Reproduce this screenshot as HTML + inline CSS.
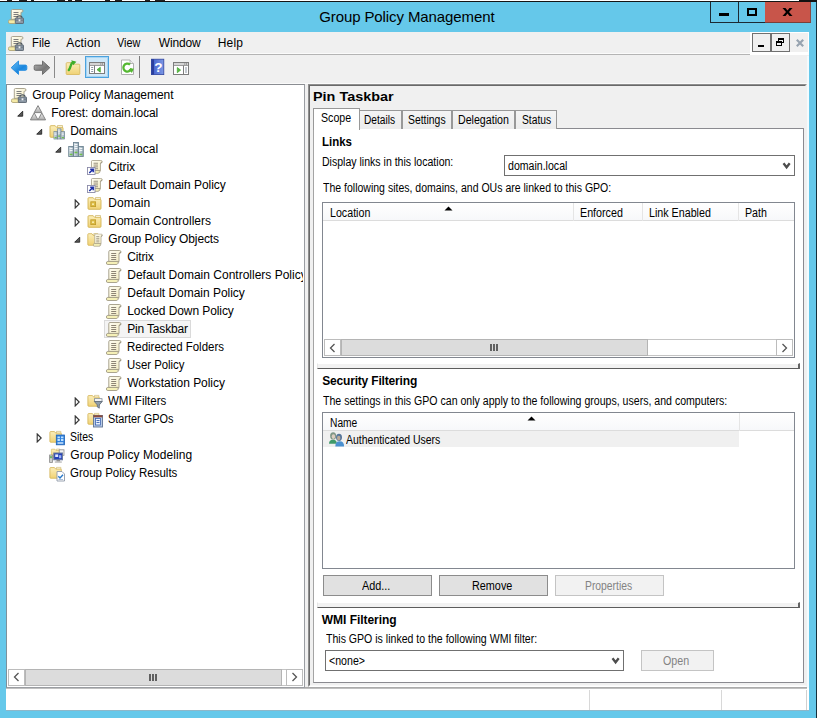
<!DOCTYPE html>
<html><head><meta charset="utf-8"><title>Group Policy Management</title>
<style>
*{box-sizing:border-box;margin:0;padding:0}
html,body{width:817px;height:718px;overflow:hidden}
body{background:#65c8ea;position:relative;font-family:"Liberation Sans",sans-serif;font-size:12px;color:#000}
.a{position:absolute}
.t{position:absolute;white-space:nowrap;line-height:20px;height:20px;transform-origin:0 50%}
.ic{position:absolute;overflow:visible}
.btn{position:absolute;border:1px solid #8c8c8c;background:#e1e1e1}
.btn.dis{background:#f2f2f2;border-color:#c4c4c4}
.lv{position:absolute;background:#fff;border:1px solid #828790}
.sb{position:absolute;background:#fff;border:1px solid #bcbcbc}
.thumb{position:absolute;background:#dcdcdc;border:1px solid #b4b4b4}
.tab{position:absolute;top:110px;height:19px;background:linear-gradient(#f4f4f4,#ececec);border:1px solid #989898;border-bottom:none}
</style></head><body>
<svg width="0" height="0" style="position:absolute">
<defs>
<linearGradient id="gPaper" x1="0" y1="0" x2="1" y2="1"><stop offset="0" stop-color="#fffef4"/><stop offset="1" stop-color="#f4ecc0"/></linearGradient>
<linearGradient id="gFold" x1="0" y1="0" x2="0" y2="1"><stop offset="0" stop-color="#fbeebb"/><stop offset="1" stop-color="#f0d274"/></linearGradient>
<linearGradient id="gGray" x1="0" y1="0" x2="0" y2="1"><stop offset="0" stop-color="#f2f2f2"/><stop offset="1" stop-color="#a9a9a9"/></linearGradient>
<linearGradient id="gSrv" x1="0" y1="0" x2="1" y2="0"><stop offset="0" stop-color="#d9e2e8"/><stop offset="1" stop-color="#8fa3b1"/></linearGradient>
<linearGradient id="gBlueArrow" x1="0" y1="0" x2="1" y2="1"><stop offset="0" stop-color="#6cc4f7"/><stop offset=".6" stop-color="#1a86de"/><stop offset="1" stop-color="#3aa0ea"/></linearGradient>
<linearGradient id="gGrayArrow" x1="0" y1="0" x2="1" y2="1"><stop offset="0" stop-color="#b5b5b5"/><stop offset=".6" stop-color="#777"/><stop offset="1" stop-color="#9a9a9a"/></linearGradient>
<symbol id="e-open" viewBox="0 0 9 10"><path d="M6.700 2.200v5h-5z" fill="#595959" stroke="#262626" stroke-width=".9"/></symbol>
<symbol id="e-closed" viewBox="0 0 9 10"><path d="M2.200 1l4 4-4 4z" fill="#fff" stroke="#333" stroke-width="1.100"/></symbol>
<symbol id="scroll" viewBox="0 0 16 16"><path d="M2.800 11.500V1.700q0-1.200 1.200-1.200h9.300q1.700 0 1.700 1.500 0 1.300-1.600 1.300h-.4v8.200z" fill="url(#gPaper)" stroke="#a29b84" stroke-width=".9"/><path d="M13 3.300q1.600 0 1.600-1.400" fill="none" stroke="#8f8a78" stroke-width=".8"/><path d="M1.800 11.400h10.400q-.2 1.800-1.500 3.100h-8.900q-1.400 0-1.400-1.500t1.400-1.600z" fill="#f5f0b6" stroke="#a29b84" stroke-width=".9"/><path d="M11 11.600q1.200.6 1.900-.1 0 1.700-1.600 2.900" fill="#e1dcbc" stroke="#a29b84" stroke-width=".6"/><path d="M5.200 3.500h5M5.200 5.500h5M5.200 7.500h5M5.200 9.500h5" stroke="#8d8474" stroke-width="1"/></symbol>
<symbol id="i-gpo" viewBox="0 0 16 16"><use href="#scroll"/></symbol>
<symbol id="i-link" viewBox="0 0 16 16"><g transform="translate(2 0) scale(.88 .92)"><use href="#scroll"/></g><rect x=".5" y="7.500" width="7.500" height="7" fill="#fff" stroke="#8a8aa8" stroke-width=".9"/><path d="M2.300 13l3.600-3.600M3.200 9.200h3v3" stroke="#1d2fa8" stroke-width="1.500" fill="none"/></symbol>
<symbol id="i-gpm" viewBox="0 0 16 16"><path d="M3.300 10.500V1.700q0-1.200 1.200-1.200h8.800q1.700 0 1.700 1.500 0 1.300-1.600 1.300h-.4v6z" fill="url(#gPaper)" stroke="#a29b84" stroke-width=".9"/><path d="M5.500 3.500h5M5.500 5.500h5M5.500 7.500h3.500" stroke="#7d7d7d" stroke-width="1"/><path d="M1.800 10.900h6v3.600h-6q-1.400 0-1.400-1.800t1.400-1.800z" fill="#f5eaa6" stroke="#b1a676" stroke-width=".9"/><path d="M9 8.700q0-1.900 2.500-1.900t2.500 1.900" fill="none" stroke="#4d5660" stroke-width="1.300"/><rect x="7.300" y="9" width="8.200" height="5.500" rx=".6" fill="#8c98a5" stroke="#5b6672" stroke-width=".9"/><path d="M7.500 11.200h8" stroke="#6c7682" stroke-width="1"/><rect x="10.600" y="10.300" width="1.800" height="2" fill="#eef0f2"/></symbol>
<symbol id="i-forest" viewBox="0 0 16 16"><path d="M8 .6l3.800 7h-7.600z" fill="url(#gGray)" stroke="#858585" stroke-width="1"/><path d="M4.200 7.900l3.800 7h-7.600z" fill="url(#gGray)" stroke="#858585" stroke-width="1"/><path d="M11.800 7.900l3.800 7h-7.600z" fill="url(#gGray)" stroke="#858585" stroke-width="1"/></symbol>
<symbol id="i-folder" viewBox="0 0 16 16"><path d="M8.500 1.500h5v3h-5z" fill="#fffdf2" stroke="#cdb567" stroke-width=".7"/><path d="M1 2.600q0-.9.9-.9h4.300l1.400 1.600h5.500q.9 0 .9.900v8.200q0 .9-.9.900h-11.200q-.9 0-.9-.9z" fill="url(#gFold)" stroke="#d4b455" stroke-width=".9"/></symbol>
<symbol id="i-domains" viewBox="0 0 16 16"><use href="#i-folder"/><g transform="translate(4.300 4.300) scale(.74)"><use href="#srv3"/></g></symbol>
<symbol id="srv3" viewBox="0 0 16 16"><rect x="5.500" y=".5" width="5" height="14" fill="url(#gSrv)" stroke="#6f8593" stroke-width=".9"/><rect x=".7" y="4.500" width="4.800" height="10" fill="url(#gSrv)" stroke="#6f8593" stroke-width=".9"/><rect x="10.500" y="4.500" width="4.800" height="10" fill="url(#gSrv)" stroke="#6f8593" stroke-width=".9"/><path d="M6.500 2.500h3M6.500 4.500h3M6.500 6.500h3M1.700 6.500h2.800M11.500 6.500h2.800M1.700 8.500h2.800M11.500 8.500h2.800" stroke="#f3f6f8" stroke-width="1"/><path d="M1.700 12.500h2.800M11.500 12.500h2.800M6.500 10.500h3" stroke="#6fc04a" stroke-width="1.600"/></symbol>
<symbol id="i-domain" viewBox="0 0 16 16"><use href="#srv3"/></symbol>
<symbol id="i-ou" viewBox="0 0 16 16"><use href="#i-folder"/><rect x="3.800" y="5.800" width="4.800" height="4.800" fill="#dcbc45" stroke="#c09b2a" stroke-width=".8"/><rect x="5" y="7.400" width="2" height="1.600" fill="#f7e9a8"/></symbol>
<symbol id="i-gpofolder" viewBox="0 0 16 16"><g transform="scale(.8 1)"><use href="#i-folder"/></g><g transform="translate(6 1.500) scale(.62 .88)"><use href="#scroll"/></g></symbol>
<symbol id="i-wmi" viewBox="0 0 16 16"><g transform="scale(.88 .92)"><use href="#i-folder"/></g><rect x="7.500" y="4.700" width="7.500" height="2.600" fill="#fff" stroke="#7c8894" stroke-width=".8"/><path d="M7.300 7.500h8l-3 3.400v3.300l-2-1.300v-2z" fill="#8e9dab" stroke="#5e6a76" stroke-width=".8"/></symbol>
<symbol id="i-starter" viewBox="0 0 16 16"><g transform="scale(.88 .92)"><use href="#i-folder"/></g><rect x="6.500" y="3.500" width="9" height="11.500" fill="#b9cbe6" stroke="#5f7392" stroke-width=".9"/><rect x="6.500" y="3.300" width="9" height="2" fill="#8c4b3b"/><rect x="8.500" y="6.500" width="5" height="6.500" fill="#eaf1fb" stroke="#3d64b0" stroke-width=".8"/><path d="M9.500 8.500h3M9.500 10.500h3" stroke="#3d64b0" stroke-width=".9"/></symbol>
<symbol id="i-sites" viewBox="0 0 16 16"><g transform="scale(.88 .92)"><use href="#i-folder"/></g><rect x="7.300" y="5" width="8.200" height="9.800" fill="#2f80dc" stroke="#1e62b4" stroke-width=".8"/><path d="M8.500 7.300h2.400M12 7.300h2.400M8.500 10h2.400M12 10h2.400" stroke="#bfe2ff" stroke-width="1.800"/><path d="M8.500 13h5.800" stroke="#e8f4ff" stroke-width="1.300"/></symbol>
<symbol id="i-modeling" viewBox="0 0 16 16"><g transform="translate(1.500 0) scale(.7 .7)"><use href="#i-folder"/></g><rect x="10.200" y="1.800" width="4.800" height="5.500" fill="#f2f2f2" stroke="#8f8f8f" stroke-width=".8"/><rect x="4.800" y="5" width="8.700" height="6.800" fill="#2340b8" stroke="#6b7a9a" stroke-width="1"/><rect x="6.200" y="6.400" width="3" height="2.600" fill="#dfe8ff"/><rect x="10" y="7.200" width="2.300" height="3" fill="#9fb4f0"/><rect x="7.500" y="12" width="3.500" height="1.500" fill="#8e8e8e"/><rect x="5.800" y="13.400" width="7" height="1.300" fill="#b5b5b5"/><rect x=".6" y="7" width="2.800" height="7.500" fill="#cfcfcf" stroke="#8a8a8a" stroke-width=".8"/><rect x="1.300" y="8.200" width="1.400" height="2" fill="#3aa83a"/></symbol>
<symbol id="i-results" viewBox="0 0 16 16"><g transform="scale(.88 .92)"><use href="#i-folder"/></g><path d="M8 5.500h5l2.500 2.500v7h-7.500z" fill="#fff" stroke="#8e98a8" stroke-width=".9"/><path d="M9.300 10.300l1.700 1.700 3-3.200" stroke="#2a78c8" fill="none" stroke-width="1.400"/><path d="M9.500 13.500h4.500" stroke="#9db7d8" stroke-width=".9"/></symbol>
</defs></svg>

<!-- top remnants -->
<div class="a" style="left:0;top:0;width:817px;height:1px;background:#fff"></div>
<div class="a" style="left:0;top:1px;width:817px;height:1px;background:#151515"></div>
<div class="a" style="left:7px;top:0;width:5px;height:1px;background:#222"></div>
<div class="a" style="left:19px;top:0;width:8px;height:1px;background:#222"></div>
<div class="a" style="left:31px;top:0;width:3px;height:1px;background:#222"></div>
<div class="a" style="left:57px;top:0;width:8px;height:1px;background:#222"></div>
<div class="a" style="left:68px;top:0;width:4px;height:1px;background:#222"></div>
<div class="a" style="left:75px;top:0;width:7px;height:1px;background:#222"></div>
<div class="a" style="left:105px;top:0;width:5px;height:1px;background:#222"></div>
<div class="a" style="left:115px;top:0;width:7px;height:1px;background:#222"></div>
<div class="a" style="left:145px;top:0;width:5px;height:1px;background:#222"></div>
<div class="a" style="left:155px;top:0;width:10px;height:1px;background:#222"></div>
<div class="a" style="left:799px;top:0;width:18px;height:2px;background:#111"></div>

<!-- title icon -->
<svg class="ic" style="left:8.400px;top:9px" width="16" height="16"><use href="#i-gpm"/></svg>

<!-- caption buttons -->
<div class="a" style="left:710px;top:2px;width:55px;height:21px;border:1px solid #1c2a33;border-top:none;border-right:none"></div>
<div class="a" style="left:738px;top:2px;width:1px;height:20px;background:#1c2a33"></div>
<div class="a" style="left:719px;top:13px;width:10px;height:3px;background:#000"></div>
<div class="a" style="left:747px;top:8px;width:10px;height:8px;border:2px solid #000"></div>
<div class="a" style="left:765px;top:2px;width:46px;height:21px;background:#c8554a;border-bottom:1px solid #7a3f3a;border-right:1px solid #8a4a44"></div>
<svg class="ic" style="left:782px;top:8px" width="11" height="8"><path d="M0.500 0h3l2 2.600 2-2.600h3l-3.500 4 3.500 4h-3l-2-2.600-2 2.600h-3l3.500-4z" fill="#000"/></svg>

<!-- client -->
<div class="a" style="left:6px;top:32px;width:803px;height:678px;background:#f0f0f0"></div>
<div class="a" style="left:807px;top:56px;width:2px;height:654px;background:#f3fbfe"></div>
<div class="a" style="left:816px;top:2px;width:1px;height:716px;background:#14303c"></div>
<div class="a" style="left:750px;top:32px;width:59px;height:23px;background:#fff"></div>
<!-- menu icon -->
<svg class="ic" style="left:8.400px;top:36px" width="16" height="16"><use href="#i-gpm"/></svg>
<!-- MDI child buttons -->
<div class="a" style="left:752px;top:33px;width:19px;height:19px;border:1px solid #707070;background:#f0f0f0"></div>
<div class="a" style="left:771px;top:33px;width:19px;height:19px;border:1px solid #707070;background:#f0f0f0"></div>
<div class="a" style="left:790px;top:33px;width:18px;height:19px;background:#f0f0f0"></div>
<div class="a" style="left:758px;top:45px;width:6px;height:2px;background:#000"></div>
<div class="a" style="left:778px;top:38px;width:6px;height:5px;border:1px solid #000;border-top-width:2px"></div>
<div class="a" style="left:776px;top:41px;width:6px;height:5px;border:1px solid #000;border-top-width:2px;background:#f0f0f0"></div>
<svg class="ic" style="left:795.500px;top:38.500px" width="8" height="8"><path d="M.8.800l6.400 6.400M7.200.800l-6.400 6.400" stroke="#97a3b0" stroke-width="2.200"/></svg>
<!-- menu/toolbar separator -->
<div class="a" style="left:6px;top:53px;width:744px;height:1px;background:#fbfbfb"></div>
<div class="a" style="left:6px;top:54px;width:744px;height:1px;background:#b4b4b4"></div>
<div class="a" style="left:6px;top:83px;width:802px;height:1px;background:#fafafa"></div>

<!-- toolbar -->
<svg class="ic" style="left:10px;top:60px" width="18" height="16"><path d="M1.200 7.700l7.300-6.700v4.100h7q1.300 0 1.300 1.300v2.600q0 1.300-1.300 1.300h-7v4.100z" fill="url(#gBlueArrow)" stroke="#2a8fe0" stroke-width="1"/></svg>
<svg class="ic" style="left:33px;top:60px" width="18" height="16"><path d="M16.800 7.700l-7.300-6.700v4.100h-7q-1.300 0-1.300 1.300v2.600q0 1.300 1.300 1.300h7v4.100z" fill="url(#gGrayArrow)" stroke="#6e6e6e" stroke-width="1"/></svg>
<div class="a" style="left:54px;top:56px;width:1px;height:22px;background:#8a8a8a"></div>
<svg class="ic" style="left:65px;top:59px" width="16" height="16"><path d="M1.200 4.500q0-.8.800-.8h4.200l1.300 1.500h6.500q.8 0 .8.800v8.700q0 .8-.8.800h-12q-.8 0-.8-.8z" fill="url(#gFold)" stroke="#d9bb62" stroke-width=".9"/><path d="M3.800 11q1.200-1.500 2-4.500.6-2.600 2.700-3.300" stroke="#3fae2a" stroke-width="2.400" fill="none" stroke-linecap="round"/><path d="M6.200 1.300l5.200 1.400-3.200 3.600z" fill="#3fae2a"/></svg>
<div class="a" style="left:85px;top:56px;width:24px;height:22px;background:#cfe8f8;border:1px solid #4ba3df;box-shadow:inset 0 0 0 1px #a8d4f2"></div>
<svg class="ic" style="left:89px;top:62px" width="16" height="12"><rect x=".5" y=".5" width="15" height="11" fill="#fff" stroke="#7d7d7d"/><rect x="1" y="1" width="14" height="2.600" fill="#d4d4d4"/><path d="M1 3.500h14" stroke="#8a8a8a" stroke-width=".8"/><rect x="11.300" y="1.500" width="1" height="1" fill="#666"/><rect x="13" y="1.500" width="1" height="1" fill="#666"/><path d="M5.500 3.500v8" stroke="#7d7d7d"/><path d="M2.200 5.500h2M2.200 7.500h2M2.200 9.500h2" stroke="#7d8a9a" stroke-width=".9"/><path d="M11.300 5.200l-3.300 2.500 3.300 2.500z" fill="#56b83f" stroke="#3fa62c" stroke-width=".7"/></svg>
<svg class="ic" style="left:120px;top:59px" width="15" height="17"><path d="M1.500 1h8.500l3.500 3.500v11h-12z" fill="#fff" stroke="#a6a6a6" stroke-width=".9"/><path d="M10 1v3.500h3.500" fill="#eee" stroke="#a6a6a6" stroke-width=".8"/><path d="M11.300 9.300a4 4 0 1 1-1.300-3.700" fill="none" stroke="#55b832" stroke-width="2.300"/><path d="M8.600 10.200l5.300-.6-2 4.400z" fill="#55b832"/></svg>
<div class="a" style="left:139px;top:56px;width:1px;height:22px;background:#7d7d7d"></div>
<svg class="ic" style="left:151px;top:59px" width="13" height="16"><defs><linearGradient id="gHelp" x1="0" y1="0" x2="1" y2="0"><stop offset="0" stop-color="#3d5ccc"/><stop offset="1" stop-color="#7c98e4"/></linearGradient></defs><rect x=".4" y=".2" width="12.400" height="15.400" fill="url(#gHelp)" stroke="#2f449e" stroke-width=".8"/><rect x=".4" y=".2" width="2.600" height="15.400" fill="#2a3f9e"/><text x="7.400" y="13" font-family="Liberation Sans, sans-serif" font-size="13.500" font-weight="700" fill="#fff" text-anchor="middle">?</text></svg>
<svg class="ic" style="left:173px;top:62px" width="16" height="13"><rect x=".5" y=".5" width="15" height="12" fill="#fff" stroke="#7d7d7d"/><rect x="1" y="1" width="14" height="2.600" fill="#d4d4d4"/><path d="M1 3.500h14" stroke="#8a8a8a" stroke-width=".8"/><rect x="11.300" y="1.500" width="1" height="1" fill="#666"/><rect x="13" y="1.500" width="1" height="1" fill="#666"/><path d="M10.500 3.500v9" stroke="#7d7d7d"/><path d="M12 6h2M12 8h2M12 10h2" stroke="#7d8a9a" stroke-width=".9"/><path d="M4.300 5.500l3.300 2.600-3.300 2.600z" fill="#56b83f" stroke="#3fa62c" stroke-width=".7"/></svg>

<!-- left pane -->
<div class="a" style="left:6px;top:84px;width:299px;height:604px;background:#fff;border:1px solid #9a9da2;border-left-color:#7d919c;border-top-color:#8a8d92"></div>
<div class="a" style="left:104px;top:320px;width:87px;height:18px;background:#f4f4f4;border:1px solid #dadada"></div>
<svg class="ic" style="left:11px;top:88px" width="16" height="16"><use href="#i-gpm"/></svg>
<svg class="ic" style="left:30px;top:105px" width="16" height="16"><use href="#i-forest"/></svg>
<svg class="ic" style="left:16px;top:109px" width="9" height="10"><use href="#e-open"/></svg>
<svg class="ic" style="left:49px;top:124px" width="16" height="16"><use href="#i-domains"/></svg>
<svg class="ic" style="left:35px;top:127px" width="9" height="10"><use href="#e-open"/></svg>
<svg class="ic" style="left:68px;top:142px" width="16" height="16"><use href="#i-domain"/></svg>
<svg class="ic" style="left:54px;top:145px" width="9" height="10"><use href="#e-open"/></svg>
<svg class="ic" style="left:87px;top:160px" width="16" height="16"><use href="#i-link"/></svg>
<svg class="ic" style="left:87px;top:178px" width="16" height="16"><use href="#i-link"/></svg>
<svg class="ic" style="left:87px;top:196px" width="16" height="16"><use href="#i-ou"/></svg>
<svg class="ic" style="left:73px;top:199px" width="9" height="10"><use href="#e-closed"/></svg>
<svg class="ic" style="left:87px;top:214px" width="16" height="16"><use href="#i-ou"/></svg>
<svg class="ic" style="left:73px;top:217px" width="9" height="10"><use href="#e-closed"/></svg>
<svg class="ic" style="left:87px;top:232px" width="16" height="16"><use href="#i-gpofolder"/></svg>
<svg class="ic" style="left:73px;top:235px" width="9" height="10"><use href="#e-open"/></svg>
<svg class="ic" style="left:106px;top:250px" width="16" height="16"><use href="#i-gpo"/></svg>
<svg class="ic" style="left:106px;top:268px" width="16" height="16"><use href="#i-gpo"/></svg>
<svg class="ic" style="left:106px;top:286px" width="16" height="16"><use href="#i-gpo"/></svg>
<svg class="ic" style="left:106px;top:304px" width="16" height="16"><use href="#i-gpo"/></svg>
<svg class="ic" style="left:106px;top:322px" width="16" height="16"><use href="#i-gpo"/></svg>
<svg class="ic" style="left:106px;top:340px" width="16" height="16"><use href="#i-gpo"/></svg>
<svg class="ic" style="left:106px;top:358px" width="16" height="16"><use href="#i-gpo"/></svg>
<svg class="ic" style="left:106px;top:376px" width="16" height="16"><use href="#i-gpo"/></svg>
<svg class="ic" style="left:87px;top:394px" width="16" height="16"><use href="#i-wmi"/></svg>
<svg class="ic" style="left:73px;top:397px" width="9" height="10"><use href="#e-closed"/></svg>
<svg class="ic" style="left:87px;top:412px" width="16" height="16"><use href="#i-starter"/></svg>
<svg class="ic" style="left:73px;top:415px" width="9" height="10"><use href="#e-closed"/></svg>
<svg class="ic" style="left:49px;top:430px" width="16" height="16"><use href="#i-sites"/></svg>
<svg class="ic" style="left:35px;top:433px" width="9" height="10"><use href="#e-closed"/></svg>
<svg class="ic" style="left:49px;top:448px" width="16" height="16"><use href="#i-modeling"/></svg>
<svg class="ic" style="left:49px;top:466px" width="16" height="16"><use href="#i-results"/></svg>
<!-- left hscroll -->
<div class="a" style="left:8px;top:669px;width:295px;height:17px;background:#fff;border-top:1px solid #c4c4c4;border-bottom:1px solid #c4c4c4"></div>
<div class="sb" style="left:8px;top:669px;width:17px;height:17px"></div>
<div class="thumb" style="left:25px;top:669px;width:257px;height:17px"></div>
<div class="sb" style="left:286px;top:669px;width:17px;height:17px"></div>
<svg class="ic" style="left:13px;top:672px" width="7" height="10"><path d="M5.500 1l-4 4 4 4" stroke="#555" stroke-width="1.300" fill="none"/></svg>
<svg class="ic" style="left:291px;top:672px" width="7" height="10"><path d="M1.500 1l4 4-4 4" stroke="#555" stroke-width="1.300" fill="none"/></svg>
<div class="a" style="left:149px;top:674px;width:2px;height:7px;background:#606060"></div>
<div class="a" style="left:152px;top:674px;width:2px;height:7px;background:#606060"></div>
<div class="a" style="left:155px;top:674px;width:2px;height:7px;background:#606060"></div>

<!-- status bar -->
<div class="a" style="left:6px;top:688px;width:803px;height:22px;background:#fff"></div>
<div class="a" style="left:305px;top:687px;width:502px;height:1px;background:#aaa"></div>
<div class="a" style="left:6px;top:688px;width:801px;height:1px;background:#c0c0c0"></div>
<div class="a" style="left:6px;top:710px;width:803px;height:1px;background:#8db7c9"></div>
<div class="a" style="left:589px;top:690px;width:1px;height:20px;background:#d8d8d8"></div>
<div class="a" style="left:721px;top:690px;width:1px;height:20px;background:#d8d8d8"></div>
<div class="a" style="left:806px;top:690px;width:1px;height:20px;background:#d0d0d0"></div>

<!-- right pane -->
<div class="a" style="left:308px;top:84px;width:499px;height:603px;background:#f0f0f0;border:1px solid #8e8e8e;border-right-color:#f0f0f0;border-bottom-color:#fff"></div>
<div class="a" style="left:309px;top:85px;width:497px;height:601px;border:1px solid #696969;border-right-color:#f0f0f0;border-bottom-color:#f8f8f8"></div>
<!-- tab page -->
<div class="a" style="left:313px;top:128px;width:491px;height:555px;background:#fff;border:1px solid #8a8a90;border-left-color:#a4a4a4"></div>
<div class="tab" style="left:358px;width:44px"></div>
<div class="tab" style="left:402px;width:50px"></div>
<div class="tab" style="left:452px;width:63px"></div>
<div class="tab" style="left:515px;width:42px"></div>
<div class="tab" style="left:313px;top:108px;width:47px;height:22px;background:#fff"></div>

<!-- combo 1 -->
<div class="a" style="left:504px;top:155px;width:291px;height:21px;background:#fff;border:1px solid #707070"></div>
<svg class="ic" style="left:782.400px;top:162px" width="9" height="8"><path d="M1.500 1.300l3.100 4 3.100-4" stroke="#4d4d4d" stroke-width="2.300" fill="none"/></svg>

<!-- links list -->
<div class="lv" style="left:322px;top:202px;width:473px;height:156px"></div>
<div class="a" style="left:323px;top:203px;width:471px;height:18px;background:linear-gradient(#fff,#f7f8fa);border-bottom:1px solid #dcdcdc"></div>
<div class="a" style="left:573px;top:203px;width:1px;height:18px;background:#e5e5e5"></div>
<div class="a" style="left:642px;top:203px;width:1px;height:18px;background:#e5e5e5"></div>
<div class="a" style="left:738px;top:203px;width:1px;height:18px;background:#e5e5e5"></div>
<svg class="ic" style="left:444px;top:206px" width="9" height="5"><path d="M0.500 4.500l4-4 4 4z" fill="#000"/></svg>
<div class="a" style="left:324px;top:339px;width:469px;height:17px;background:#fff;border-top:1px solid #c4c4c4;border-bottom:1px solid #c4c4c4"></div>
<div class="sb" style="left:324px;top:339px;width:17px;height:17px"></div>
<div class="thumb" style="left:341px;top:339px;width:307px;height:17px"></div>
<div class="sb" style="left:776px;top:339px;width:17px;height:17px"></div>
<svg class="ic" style="left:329px;top:343px" width="7" height="10"><path d="M5.500 1l-4 4 4 4" stroke="#555" stroke-width="1.300" fill="none"/></svg>
<svg class="ic" style="left:781px;top:343px" width="7" height="10"><path d="M1.500 1l4 4-4 4" stroke="#555" stroke-width="1.300" fill="none"/></svg>
<div class="a" style="left:490px;top:344px;width:2px;height:7px;background:#606060"></div>
<div class="a" style="left:493px;top:344px;width:2px;height:7px;background:#606060"></div>
<div class="a" style="left:496px;top:344px;width:2px;height:7px;background:#606060"></div>

<!-- etched separators -->
<div class="a" style="left:317px;top:363px;width:483px;height:6px;background:#f2f2f2;border-top:1px solid #fff;border-left:1px solid #e6e6e6;border-right:2px solid #646464;border-bottom:1px solid #5c5c5c"></div>
<div class="a" style="left:317px;top:602px;width:483px;height:6px;background:#f2f2f2;border-top:1px solid #fff;border-left:1px solid #e6e6e6;border-right:2px solid #646464;border-bottom:1px solid #5c5c5c"></div>

<!-- security list -->
<div class="lv" style="left:322px;top:412px;width:473px;height:157px"></div>
<div class="a" style="left:323px;top:413px;width:471px;height:18px;background:linear-gradient(#fff,#f7f8fa);border-bottom:1px solid #dcdcdc"></div>
<div class="a" style="left:739px;top:413px;width:1px;height:18px;background:#e5e5e5"></div>
<div class="a" style="left:323px;top:431px;width:416px;height:16px;background:#f0f0f0"></div>
<svg class="ic" style="left:527px;top:415.500px" width="9" height="5"><path d="M0.500 4.500l4-4 4 4z" fill="#000"/></svg>
<svg class="ic" style="left:328px;top:431px" width="16" height="16"><path d="M1 12.800q0-4 4-4t3.800 4z" fill="#3f9a6a"/><ellipse cx="5.100" cy="4.900" rx="3" ry="3.600" fill="#7f9686"/><ellipse cx="5.400" cy="5.600" rx="1.700" ry="2.400" fill="#dccdbf"/><path d="M7.300 15.500q0-5.300 4.400-5.300t4.400 5.300z" fill="#4a90d0"/><ellipse cx="11" cy="6.300" rx="3" ry="3.600" fill="#56769a"/><ellipse cx="10.700" cy="7.100" rx="1.700" ry="2.300" fill="#bba996"/></svg>

<!-- buttons -->
<div class="btn" style="left:323px;top:575px;width:109px;height:21px"></div>
<div class="btn" style="left:439px;top:575px;width:109px;height:21px"></div>
<div class="btn dis" style="left:555px;top:575px;width:109px;height:21px"></div>

<!-- wmi combo + open -->
<div class="a" style="left:325px;top:650px;width:299px;height:21px;background:#fff;border:1px solid #707070"></div>
<svg class="ic" style="left:611px;top:657px" width="9" height="8"><path d="M1.500 1.300l3.100 4 3.100-4" stroke="#4d4d4d" stroke-width="2.300" fill="none"/></svg>
<div class="btn dis" style="left:641px;top:650px;width:73px;height:21px"></div>

<span class="t " id="t0" style="left:319.20px;top:6.50px;font-size:15px;letter-spacing:-0.097px;">Group Policy Management</span>
<span class="t " id="t1" style="left:32.31px;top:32.50px;font-size:12px;transform:scaleX(0.9405);">File</span>
<span class="t " id="t2" style="left:66.30px;top:32.50px;font-size:12px;letter-spacing:0.144px;">Action</span>
<span class="t " id="t3" style="left:117.25px;top:32.50px;font-size:12px;transform:scaleX(0.9039);">View</span>
<span class="t " id="t4" style="left:158.75px;top:32.50px;font-size:12px;letter-spacing:-0.173px;">Window</span>
<span class="t " id="t5" style="left:217.75px;top:32.50px;font-size:12px;letter-spacing:0.181px;">Help</span>
<span class="t tr" id="t6" style="left:32.30px;top:84.50px;font-size:12px;letter-spacing:-0.036px;">Group Policy Management</span>
<span class="t tr" id="t7" style="left:51.25px;top:102.50px;font-size:12px;letter-spacing:-0.054px;">Forest: domain.local</span>
<span class="t tr" id="t8" style="left:70.25px;top:120.50px;font-size:12px;letter-spacing:-0.050px;">Domains</span>
<span class="t tr" id="t9" style="left:89.70px;top:138.50px;font-size:12px;letter-spacing:0.109px;">domain.local</span>
<span class="t tr" id="t10" style="left:108.30px;top:156.50px;font-size:12px;letter-spacing:-0.146px;">Citrix</span>
<span class="t tr" id="t11" style="left:108.25px;top:174.50px;font-size:12px;letter-spacing:-0.025px;">Default Domain Policy</span>
<span class="t tr" id="t12" style="left:108.25px;top:192.50px;font-size:12px;letter-spacing:0.135px;">Domain</span>
<span class="t tr" id="t13" style="left:108.25px;top:210.50px;font-size:12px;letter-spacing:0.003px;">Domain Controllers</span>
<span class="t tr" id="t14" style="left:108.30px;top:228.50px;font-size:12px;letter-spacing:-0.101px;">Group Policy Objects</span>
<span class="t tr" id="t15" style="left:127.30px;top:246.50px;font-size:12px;letter-spacing:-0.166px;">Citrix</span>
<span class="t tr" id="t16" style="left:127.25px;top:264.50px;font-size:12px;overflow:hidden;width:176.05px;">Default Domain Controllers Policy</span>
<span class="t tr" id="t17" style="left:127.25px;top:282.50px;font-size:12px;letter-spacing:-0.025px;">Default Domain Policy</span>
<span class="t tr" id="t18" style="left:127.25px;top:300.50px;font-size:12px;letter-spacing:-0.088px;">Locked Down Policy</span>
<span class="t tr" id="t19" style="left:127.25px;top:318.50px;font-size:12px;letter-spacing:-0.175px;">Pin Taskbar</span>
<span class="t tr" id="t20" style="left:127.29px;top:336.50px;font-size:12px;transform:scaleX(0.9567);">Redirected Folders</span>
<span class="t tr" id="t21" style="left:127.35px;top:354.50px;font-size:12px;transform:scaleX(0.9468);">User Policy</span>
<span class="t tr" id="t22" style="left:127.25px;top:372.50px;font-size:12px;letter-spacing:-0.049px;">Workstation Policy</span>
<span class="t tr" id="t23" style="left:108.25px;top:390.50px;font-size:12px;transform:scaleX(0.9600);">WMI Filters</span>
<span class="t tr" id="t24" style="left:108.45px;top:408.50px;font-size:12px;transform:scaleX(0.9084);">Starter GPOs</span>
<span class="t tr" id="t25" style="left:70.46px;top:426.50px;font-size:12px;transform:scaleX(0.8728);">Sites</span>
<span class="t tr" id="t26" style="left:70.30px;top:444.50px;font-size:12px;letter-spacing:0.055px;">Group Policy Modeling</span>
<span class="t tr" id="t27" style="left:70.33px;top:462.50px;font-size:12px;transform:scaleX(0.9582);">Group Policy Results</span>
<span class="t " id="t28" style="left:312.60px;top:87.25px;font-size:13.5px;font-weight:700;transform:scaleX(1.0672);">Pin Taskbar</span>
<span class="t " id="t29" style="left:321.01px;top:107.75px;font-size:12px;transform:scaleX(0.8863);">Scope</span>
<span class="t " id="t30" style="left:364.49px;top:109.75px;font-size:12px;transform:scaleX(0.8491);">Details</span>
<span class="t " id="t31" style="left:408.27px;top:109.75px;font-size:12px;transform:scaleX(0.8667);">Settings</span>
<span class="t " id="t32" style="left:458.16px;top:109.75px;font-size:12px;transform:scaleX(0.8859);">Delegation</span>
<span class="t " id="t33" style="left:521.57px;top:109.75px;font-size:12px;transform:scaleX(0.8575);">Status</span>
<span class="t " id="t34" style="left:321.99px;top:131.50px;font-size:12px;font-weight:700;transform:scaleX(0.9562);">Links</span>
<span class="t " id="t35" style="left:321.92px;top:152.00px;font-size:12px;transform:scaleX(0.8788);">Display links in this location:</span>
<span class="t " id="t36" style="left:507.56px;top:156.00px;font-size:12px;transform:scaleX(0.8812);">domain.local</span>
<span class="t " id="t37" style="left:322.53px;top:177.50px;font-size:12px;transform:scaleX(0.8764);">The following sites, domains, and OUs are linked to this GPO:</span>
<span class="t " id="t38" style="left:330.36px;top:203.00px;font-size:12px;transform:scaleX(0.8890);">Location</span>
<span class="t " id="t39" style="left:579.75px;top:203.00px;font-size:12px;transform:scaleX(0.8931);">Enforced</span>
<span class="t " id="t40" style="left:648.75px;top:203.00px;font-size:12px;transform:scaleX(0.8920);">Link Enabled</span>
<span class="t " id="t41" style="left:744.76px;top:203.00px;font-size:12px;transform:scaleX(0.8884);">Path</span>
<span class="t " id="t42" style="left:322.15px;top:371.00px;font-size:12px;font-weight:700;letter-spacing:-0.173px;">Security Filtering</span>
<span class="t " id="t43" style="left:322.53px;top:391.00px;font-size:12px;transform:scaleX(0.8807);">The settings in this GPO can only apply to the following groups, users, and computers:</span>
<span class="t " id="t44" style="left:330.19px;top:413.00px;font-size:12px;transform:scaleX(0.8515);">Name</span>
<span class="t " id="t45" style="left:345.90px;top:430.00px;font-size:12px;transform:scaleX(0.8731);">Authenticated Users</span>
<span class="t " id="t46" style="left:362.40px;top:576.00px;font-size:12px;transform:scaleX(0.9052);">Add...</span>
<span class="t " id="t47" style="left:472.14px;top:576.00px;font-size:12px;transform:scaleX(0.9026);">Remove</span>
<span class="t " id="t48" style="left:585.18px;top:576.00px;font-size:12px;color:#838383;transform:scaleX(0.8624);">Properties</span>
<span class="t " id="t49" style="left:321.85px;top:610.00px;font-size:12px;font-weight:700;letter-spacing:-0.045px;">WMI Filtering</span>
<span class="t " id="t50" style="left:325.78px;top:629.00px;font-size:12px;transform:scaleX(0.8796);">This GPO is linked to the following WMI filter:</span>
<span class="t " id="t51" style="left:328.96px;top:651.00px;font-size:12px;transform:scaleX(0.8838);">&lt;none&gt;</span>
<span class="t " id="t52" style="left:662.96px;top:651.00px;font-size:12px;color:#838383;transform:scaleX(0.8918);">Open</span>
</body></html>
